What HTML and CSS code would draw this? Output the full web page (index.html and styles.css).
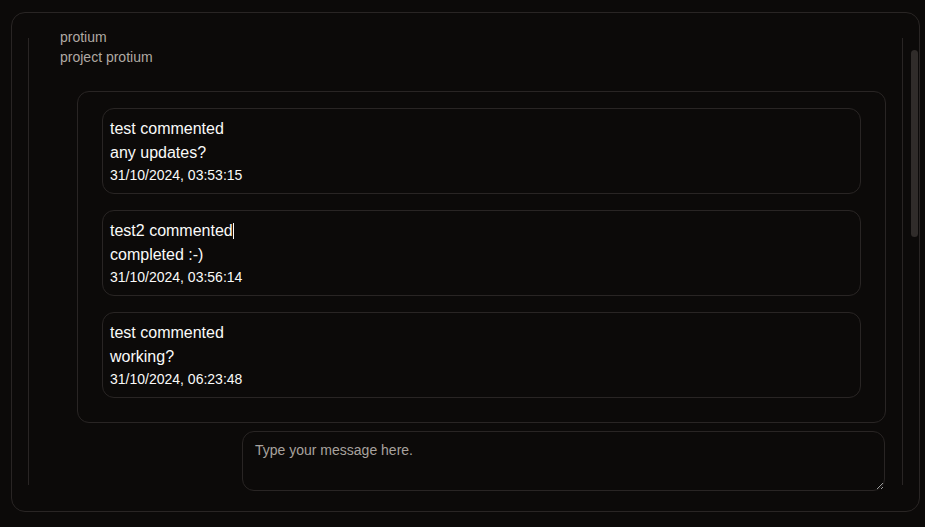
FILE: index.html
```html
<!DOCTYPE html>
<html lang="en">
<head>
<meta charset="utf-8">
<title>protium</title>
<link rel="stylesheet" href="styles.css">
</head>
<body>
<main class="card">
  <header class="project">
    <div class="project-name">protium</div>
    <div class="project-title">project protium</div>
  </header>
  <section class="comments">
    <article class="comment">
      <div class="comment-head">test commented</div>
      <div class="comment-body">any updates?</div>
      <div class="comment-date">31/10/2024, 03:53:15</div>
    </article>
    <article class="comment">
      <div class="comment-head">test2 commented<span class="caret"></span></div>
      <div class="comment-body">completed :-)</div>
      <div class="comment-date">31/10/2024, 03:56:14</div>
    </article>
    <article class="comment">
      <div class="comment-head">test commented</div>
      <div class="comment-body">working?</div>
      <div class="comment-date">31/10/2024, 06:23:48</div>
    </article>
  </section>
  <textarea class="message" placeholder="Type your message here."></textarea>
</main>
</body>
</html>
```
FILE: styles.css
```css
html, body {
  margin: 0;
  padding: 0;
  background: #0c0a09;
}
body {
  font-family: "Liberation Sans", Arial, sans-serif;
  color: #fafaf9;
  padding: 12px 5px 15px 11px;
  width: 909px;
}
.card {
  position: relative;
  box-sizing: border-box;
  width: 909px;
  height: 500px;
  border: 1px solid #292524;
  border-radius: 14px;
  padding: 14px 33px 0 0;
  display: flex;
  flex-direction: column;
}
.card::before {
  content: "";
  position: absolute;
  left: 16px;
  right: 16px;
  top: 25px;
  bottom: 26px;
  border-left: 1px solid #292524;
  border-right: 1px solid #292524;
  pointer-events: none;
}
.card::after {
  content: "";
  position: absolute;
  right: 1px;
  top: 37px;
  width: 7px;
  height: 187px;
  border-radius: 4px;
  background: #302c2a;
}
.project {
  padding-left: 48px;
  font-size: 14px;
  line-height: 20px;
  color: #b0a9a3;
}
.comments {
  margin: 24px 0 0 65px;
  border: 1px solid #292524;
  border-radius: 12px;
  padding: 16px 24px 24px 24px;
  display: flex;
  flex-direction: column;
  gap: 16px;
}
.comment {
  border: 1px solid #292524;
  border-radius: 12px;
  padding: 8px 7px;
}
.comment-head, .comment-body {
  font-size: 16px;
  line-height: 24px;
}
.comment-date {
  font-size: 14px;
  line-height: 20px;
}
.caret {
  display: inline-block;
  width: 1px;
  height: 16px;
  background: #fafaf9;
  vertical-align: -3px;
}
.message {
  color-scheme: dark;
  box-sizing: border-box;
  align-self: flex-end;
  width: 643px;
  height: 60px;
  margin-top: 8px;
  margin-right: 1px;
  padding: 10px 12px;
  background: #0c0a09;
  border: 1px solid #292524;
  border-radius: 12px;
  font-family: "Liberation Sans", Arial, sans-serif;
  font-size: 14px;
  color: #fafaf9;
  resize: vertical;
  outline: none;
}
.message::placeholder {
  color: #a8a29e;
}
```
